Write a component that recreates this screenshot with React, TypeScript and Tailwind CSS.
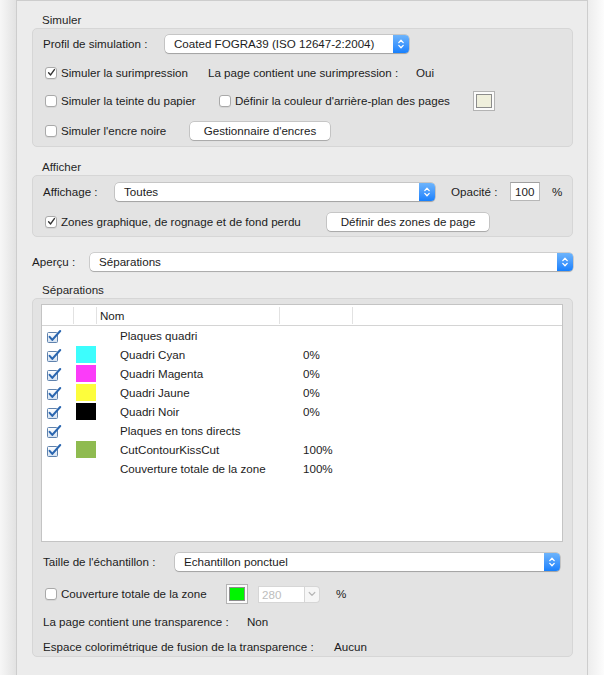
import React from "react";

const Stepper = () => (
  <div className="flex w-[16px] items-center justify-center rounded-r-[4px] bg-gradient-to-b from-[#6db4fb] to-[#1580fd]">
    <svg width="8" height="12" viewBox="0 0 8 12" fill="none">
      <path d="M1.8 4.6 L4 2.3 L6.2 4.6" stroke="white" strokeWidth="1.3" strokeLinecap="round" strokeLinejoin="round" />
      <path d="M1.8 7.4 L4 9.7 L6.2 7.4" stroke="white" strokeWidth="1.3" strokeLinecap="round" strokeLinejoin="round" />
    </svg>
  </div>
);

const Popup = ({ value, className = "" }: { value: string; className?: string }) => (
  <div
    className={`flex h-[18px] items-stretch rounded-[4px] bg-white shadow-[0_0_0_0.5px_rgba(0,0,0,0.25),0_1px_1px_rgba(0,0,0,0.18)] ${className}`}
  >
    <div className="flex-1 truncate pl-[9px] leading-[18px]">{value}</div>
    <Stepper />
  </div>
);

const Button = ({ label, className = "" }: { label: string; className?: string }) => (
  <div
    className={`flex h-[18px] items-center justify-center rounded-[4px] bg-white shadow-[0_0_0_0.5px_rgba(0,0,0,0.25),0_1px_1px_rgba(0,0,0,0.15)] ${className}`}
  >
    {label}
  </div>
);

const Check = ({ checked }: { checked?: boolean }) => (
  <div className="flex h-[12px] w-[12px] shrink-0 items-center justify-center rounded-[3px] border border-[#a9a9a9] bg-white shadow-[0_1px_0_rgba(0,0,0,0.06)]">
    {checked && (
      <svg width="9" height="9" viewBox="0 0 9 9" fill="none">
        <path d="M1.6 4.8 L3.6 6.9 L7.4 1.6" stroke="#333" strokeWidth="1.4" strokeLinecap="round" strokeLinejoin="round" />
      </svg>
    )}
  </div>
);

const CheckLabel = ({ checked, label, className = "" }: { checked?: boolean; label: string; className?: string }) => (
  <div className={`flex shrink-0 items-center ${className}`}>
    <Check checked={checked} />
    <span className="ml-[4px] whitespace-nowrap">{label}</span>
  </div>
);

const ColorWell = ({ color }: { color: string }) => (
  <div className="flex h-[20px] w-[22px] shrink-0 items-center justify-center border border-[#b3b3b3] bg-[#fbfbfb]">
    <div className="h-[14px] w-[16px] border border-[#8c8c8c]" style={{ background: color }} />
  </div>
);

const TableCheck = () => (
  <svg width="16" height="14" viewBox="0 0 16 14" fill="none">
    <defs>
      <linearGradient id="tbx" x1="0" y1="0" x2="0" y2="1">
        <stop offset="0" stopColor="#ffffff" />
        <stop offset="1" stopColor="#d3e1f1" />
      </linearGradient>
    </defs>
    <rect x="1.5" y="3.5" width="10" height="10" rx="1" fill="url(#tbx)" stroke="#5f82ad" />
    <path d="M3.6 7.9 L6.3 10.9 L14.2 2" stroke="#2a66b0" strokeWidth="2.1" strokeLinecap="round" strokeLinejoin="round" />
  </svg>
);

const Group = ({ title, children, className = "" }: { title: string; children: React.ReactNode; className?: string }) => (
  <div className={className}>
    <div className="h-[16px] pl-[10px] leading-[16px] text-[#262626]">{title}</div>
    <div className="rounded-[5px] border border-[#d6d6d6] bg-[#e3e3e3]">{children}</div>
  </div>
);

const rows = [
  { checked: true, color: "", name: "Plaques quadri", pct: "" },
  { checked: true, color: "#3dfdfd", name: "Quadri Cyan", pct: "0%" },
  { checked: true, color: "#fb3cf9", name: "Quadri Magenta", pct: "0%" },
  { checked: true, color: "#fdfd3c", name: "Quadri Jaune", pct: "0%" },
  { checked: true, color: "#000000", name: "Quadri Noir", pct: "0%" },
  { checked: true, color: "", name: "Plaques en tons directs", pct: "" },
  { checked: true, color: "#8fbb50", name: "CutContourKissCut", pct: "100%" },
  { checked: false, color: "", name: "Couverture totale de la zone", pct: "100%" },
];

export default function App() {
  return (
    <div className="flex h-[675px] w-[604px] overflow-hidden bg-white font-['Liberation_Sans',Arial,sans-serif] text-[11.6px] text-[#1c1c1c]">
      <div className="w-[16px] shrink-0 bg-gradient-to-r from-[#f7f7f7] to-[#e2e2e2]" />
      <div className="w-[572px] shrink-0 border-x border-t border-[#cdcdcd] bg-[#ececec] pl-[15px] pr-[14px] pt-[11px]">
        {/* Simuler */}
        <Group title="Simuler">
          <div className="mt-[6px] flex h-[18px] items-center pl-[10px]">
            <span className="w-[122px] shrink-0">Profil de simulation :</span>
            <Popup value="Coated FOGRA39 (ISO 12647-2:2004)" className="w-[244px]" />
          </div>
          <div className="mt-[11px] flex h-[18px] items-center pl-[12px]">
            <CheckLabel checked label="Simuler la surimpression" className="w-[163px]" />
            <span className="w-[208px] shrink-0">La page contient une surimpression :</span>
            <span>Oui</span>
          </div>
          <div className="mt-[9px] flex h-[20px] items-center pl-[12px]">
            <CheckLabel label="Simuler la teinte du papier" className="w-[174px]" />
            <CheckLabel label="Définir la couleur d'arrière-plan des pages" className="w-[254px]" />
            <ColorWell color="#efefdc" />
          </div>
          <div className="mb-[6px] mt-[11px] flex h-[18px] items-center pl-[12px]">
            <CheckLabel label="Simuler l'encre noire" className="w-[145px]" />
            <Button label="Gestionnaire d'encres" className="w-[140px]" />
          </div>
        </Group>

        {/* Afficher */}
        <Group title="Afficher" className="mt-[12px]">
          <div className="mt-[6px] flex h-[19px] items-center pl-[10px]">
            <span className="w-[72px] shrink-0">Affichage :</span>
            <Popup value="Toutes" className="w-[320px]" />
            <span className="ml-[16px] w-[59px] shrink-0">Opacité :</span>
            <div className="h-[19px] w-[30px] shrink-0 border border-[#b7b7b7] border-t-[#a0a0a0] bg-white pl-[4px] leading-[17px]">100</div>
            <span className="ml-[12px]">%</span>
          </div>
          <div className="mb-[5px] mt-[12px] flex h-[18px] items-center pl-[12px]">
            <CheckLabel checked label="Zones graphique, de rognage et de fond perdu" className="w-[282px]" />
            <Button label="Définir des zones de page" className="w-[162px]" />
          </div>
        </Group>

        {/* Aperçu */}
        <div className="mt-[16px] flex h-[18px] items-center">
          <span className="w-[58px] shrink-0">Aperçu :</span>
          <Popup value="Séparations" className="flex-1" />
        </div>

        {/* Séparations */}
        <Group title="Séparations" className="mt-[11px]">
          <div className="ml-[8px] mr-[9px] mt-[5px] h-[238px] border border-[#c4c4c4] bg-white">
            <div className="grid h-[21px] grid-cols-[32px_23px_183px_73px_1fr] items-center border-b border-[#d4d4d4]">
              <div className="h-[17px] border-r border-[#e2e2e2]" />
              <div className="h-[17px] border-r border-[#e2e2e2]" />
              <div className="h-[17px] border-r border-[#e2e2e2] pl-[3px] leading-[17px]">Nom</div>
              <div className="h-[17px] border-r border-[#e2e2e2]" />
              <div />
            </div>
            {rows.map((r, i) => (
              <div key={i} className="grid h-[19px] grid-cols-[32px_23px_183px_73px_1fr] items-center">
                <div className="flex items-center pl-[4px]">{r.checked && <TableCheck />}</div>
                <div className="flex items-center pl-[2px]">
                  {r.color && <div className="h-[17px] w-[20px]" style={{ background: r.color }} />}
                </div>
                <div className="whitespace-nowrap pl-[23px]">{r.name}</div>
                <div className="pl-[23px]">{r.pct}</div>
                <div />
              </div>
            ))}
          </div>

          <div className="mt-[11px] flex h-[18px] items-center pl-[10px]">
            <span className="w-[132px] shrink-0">Taille de l'échantillon :</span>
            <Popup value="Echantillon ponctuel" className="w-[385px]" />
          </div>

          <div className="mt-[13px] flex h-[20px] items-center pl-[12px]">
            <CheckLabel label="Couverture totale de la zone" className="w-[181px]" />
            <ColorWell color="#00f500" />
            <div className="ml-[10px] flex h-[17px] w-[62px] shrink-0">
              <div className="flex-1 border border-[#d6d6d6] bg-white pl-[3px] leading-[15px] text-[#bdbdbd]">280</div>
              <div className="flex w-[15px] items-center justify-center rounded-r-[4px] border border-l-0 border-[#d6d6d6] bg-[#f6f6f6]">
                <svg width="8" height="6" viewBox="0 0 8 6" fill="none">
                  <path d="M1.2 1.5 L4 4.3 L6.8 1.5" stroke="#b5b5b5" strokeWidth="1.2" strokeLinecap="round" strokeLinejoin="round" />
                </svg>
              </div>
            </div>
            <span className="ml-[16px]">%</span>
          </div>

          <div className="mt-[10px] flex h-[16px] items-center pl-[10px]">
            <span className="w-[204px] shrink-0">La page contient une transparence :</span>
            <span>Non</span>
          </div>
          <div className="mb-[1px] mt-[9px] flex h-[16px] items-center pl-[10px]">
            <span className="w-[291px] shrink-0">Espace colorimétrique de fusion de la transparence :</span>
            <span>Aucun</span>
          </div>
        </Group>
      </div>
      <div className="w-[16px] shrink-0 bg-gradient-to-r from-[#ededed] to-[#fcfcfc]" />
    </div>
  );
}
